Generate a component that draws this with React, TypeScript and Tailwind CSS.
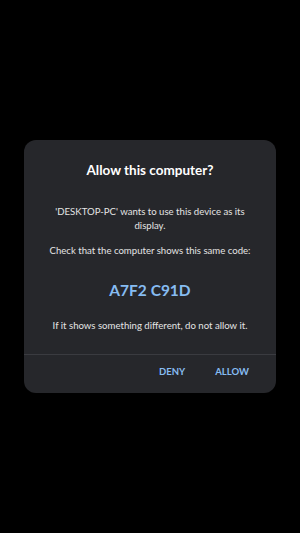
import React from 'react';

const App: React.FC = () => {
  return (
    <div className="w-[300px] h-[533px] bg-black flex items-center justify-center" style={{ fontFamily: 'Lato, "Noto Sans", sans-serif' }}>
      <div className="w-[252px] bg-[#26272b] rounded-[12px] flex flex-col overflow-hidden">
        {/* Body */}
        <div className="px-[18px] pt-[20px] pb-[21px] flex flex-col items-center text-center">
          <h2 className="text-white font-bold text-[13.5px] leading-[20px]">Allow this computer?</h2>
          <p className="mt-[25px] text-[#e4e4e4] text-[9.6px] leading-[13.5px]">
            'DESKTOP-PC' wants to use this device as its display.
          </p>
          <p className="mt-[12px] text-[#e4e4e4] text-[9.6px] leading-[13.5px]">
            Check that the computer shows this same code:
          </p>
          <div className="mt-[21.5px] text-[#86bcf2] font-bold text-[15.5px] leading-[22px]">A7F2 C91D</div>
          <p className="mt-[18px] text-[#e4e4e4] text-[9.6px] leading-[13.5px]">
            If it shows something different, do not allow it.
          </p>
        </div>

        {/* Actions */}
        <div className="border-t border-[#3a3b40] flex justify-end items-start gap-[30px] pr-[27px] pt-[12px] h-[39px]">
          <button className="text-[#86bcf2] font-bold text-[9.5px] leading-[10px]">DENY</button>
          <button className="text-[#86bcf2] font-bold text-[9.5px] leading-[10px]">ALLOW</button>
        </div>
      </div>
    </div>
  );
};

export default App;
